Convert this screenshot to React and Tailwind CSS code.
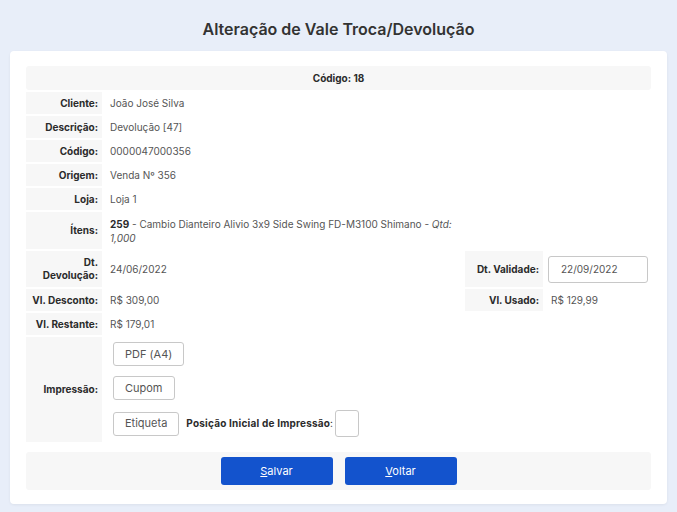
import React from 'react';

const Label = ({ children, className = '' }) => (
  <div className={`bg-[#f7f7f7] flex items-center justify-end pr-[4px] text-right font-bold text-[10px] leading-[13px] text-[#2b2b2b] ${className}`}>
    {children}
  </div>
);

const Value = ({ children, className = '' }) => (
  <div className={`flex items-center pl-[6px] text-[10px] leading-[13px] text-[#555] ${className}`}>
    {children}
  </div>
);

const OutlineBtn = ({ children, className = '' }) => (
  <button className={`h-[24px] px-[11px] border border-[#c8c8c8] rounded-[3px] bg-white text-[11px] text-[#555] ${className}`}>
    {children}
  </button>
);

export default function App() {
  return (
    <div
      className="min-h-[512px] bg-[#e8eef9] px-[10px] pt-[18px] pb-[9px]"
      style={{ fontFamily: 'Inter, "Open Sans", sans-serif', fontFeatureSettings: '"calt" 0' }}
    >
      <h1 className="text-center text-[16px] font-semibold text-[#333] leading-[22px]">
        Alteração de Vale Troca/Devolução
      </h1>

      <div className="mt-[11px] bg-white rounded-[4px] shadow-[0_1px_3px_rgba(0,0,0,0.06)] px-[16px] pt-[15px] pb-[14px]">
        <div className="h-[24px] bg-[#f7f7f7] rounded-[3px] flex items-center justify-center text-[10px] font-bold text-[#2b2b2b]">
          Código: 18
        </div>

        <div className="mt-[2px] grid grid-cols-[76px_359px_78px_107px] gap-[2px]">
          <Label className="h-[22px]">Cliente:</Label>
          <Value className="col-span-3">João José Silva</Value>

          <Label className="h-[22px]">Descrição:</Label>
          <Value className="col-span-3">Devolução [47]</Value>

          <Label className="h-[22px]">Código:</Label>
          <Value className="col-span-3">0000047000356</Value>

          <Label className="h-[22px]">Origem:</Label>
          <Value className="col-span-3">Venda Nº 356</Value>

          <Label className="h-[22px]">Loja:</Label>
          <Value className="col-span-3">Loja 1</Value>

          <Label className="h-[37px]">Ítens:</Label>
          <Value className="col-span-3 pr-[180px] leading-[14px]">
            <span>
              <b className="text-[#2b2b2b]">259</b> - Cambio Dianteiro Alivio 3x9 Side Swing FD-M3100 Shimano - <i>Qtd: 1,000</i>
            </span>
          </Value>

          <Label className="h-[36px]">Dt.<br />Devolução:</Label>
          <Value>24/06/2022</Value>
          <Label>Dt. Validade:</Label>
          <div className="flex items-center pl-[3px]">
            <input
              defaultValue="22/09/2022"
              className="w-[100px] h-[27px] border border-[#c8c8c8] rounded-[3px] px-[12px] text-[10px] text-[#555] outline-none"
            />
          </div>

          <Label className="h-[22px]">Vl. Desconto:</Label>
          <Value>R$ 309,00</Value>
          <Label>Vl. Usado:</Label>
          <Value className="pl-[4px]">R$ 129,99</Value>

          <Label className="h-[22px]">Vl. Restante:</Label>
          <Value className="col-span-3">R$ 179,01</Value>

          <Label className="h-[105px]">Impressão:</Label>
          <div className="col-span-3 flex flex-col items-start gap-[10px] pl-[9px] pt-[5px]">
            <OutlineBtn>PDF (A4)</OutlineBtn>
            <OutlineBtn>Cupom</OutlineBtn>
            <div className="flex items-center">
              <OutlineBtn>Etiqueta</OutlineBtn>
              <span className="ml-[7px] text-[10px] font-bold tracking-[0.2px] text-[#2b2b2b]">Posição Inicial de Impressão</span>
              <span className="text-[10px] text-[#333]">:</span>
              <input className="ml-[2px] w-[24px] h-[27px] border border-[#c8c8c8] rounded-[3px] outline-none" />
            </div>
          </div>
        </div>

        <div className="mt-[10px] h-[38px] bg-[#f7f7f7] rounded-[3px] flex items-center justify-center gap-[12px]">
          <button className="w-[112px] h-[28px] bg-[#1353cd] rounded-[3px] text-white text-[11px]">
            <u>S</u>alvar
          </button>
          <button className="w-[112px] h-[28px] bg-[#1353cd] rounded-[3px] text-white text-[11px]">
            <u>V</u>oltar
          </button>
        </div>
      </div>
    </div>
  );
}
